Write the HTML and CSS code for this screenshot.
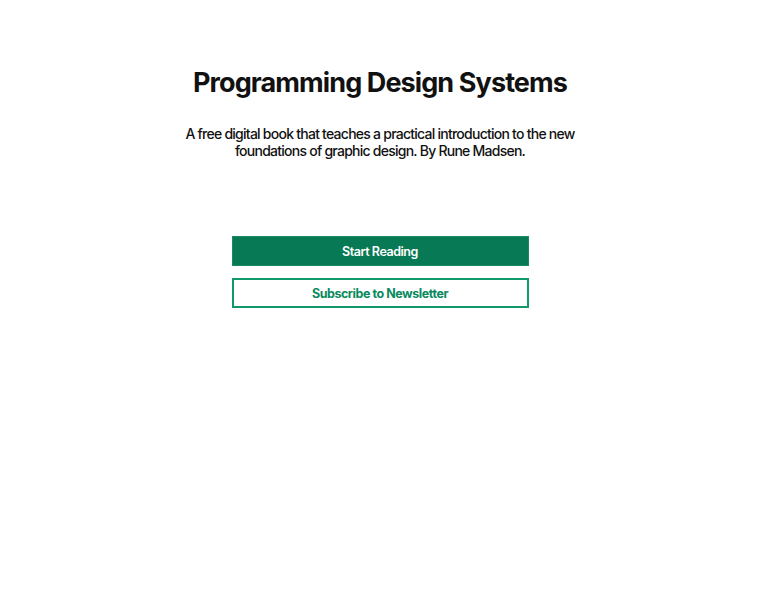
FILE: index.html
```html
<!DOCTYPE html>
<html>
<head>
<meta charset="utf-8">
<link rel="stylesheet" href="styles.css">
</head>
<body>
<main class="hero">
  <h1 class="title">Programming Design Systems</h1>
  <p class="lead">A free digital book that teaches a practical introduction to the new foundations of graphic design. By Rune Madsen.</p>
  <div class="actions">
    <a class="btn btn-primary" href="#">Start Reading</a>
    <a class="btn btn-outline" href="#">Subscribe to Newsletter</a>
  </div>
</main>
</body>
</html>
```
FILE: styles.css
```css
html, body {
  margin: 0;
  padding: 0;
  background: #ffffff;
}
body {
  font-family: Inter, "Liberation Sans", sans-serif;
  color: #111111;
}
.hero {
  display: flex;
  flex-direction: column;
  align-items: center;
  padding-top: 66px;
}
.title {
  margin: 0;
  font-size: 27px;
  font-weight: 700;
  letter-spacing: -0.9px;
  line-height: 34px;
}
.lead {
  margin: 25px 0 0;
  width: 400px;
  text-align: center;
  font-size: 14px;
  font-weight: 500;
  line-height: 17px;
  letter-spacing: -0.75px;
}
.actions {
  margin-top: 77px;
  width: 297px;
  display: flex;
  flex-direction: column;
  gap: 12px;
}
.btn {
  display: flex;
  align-items: center;
  justify-content: center;
  height: 30px;
  box-sizing: border-box;
  text-decoration: none;
  font-size: 12.5px;
  font-weight: 600;
  letter-spacing: -0.45px;
}
.btn-primary {
  background: #077a55;
  color: #ffffff;
  border: 1px solid #1a8a62;
}
.btn-outline {
  background: #ffffff;
  color: #0a8a5e;
  border: 2px solid #10996a;
  font-weight: 700;
}
```
